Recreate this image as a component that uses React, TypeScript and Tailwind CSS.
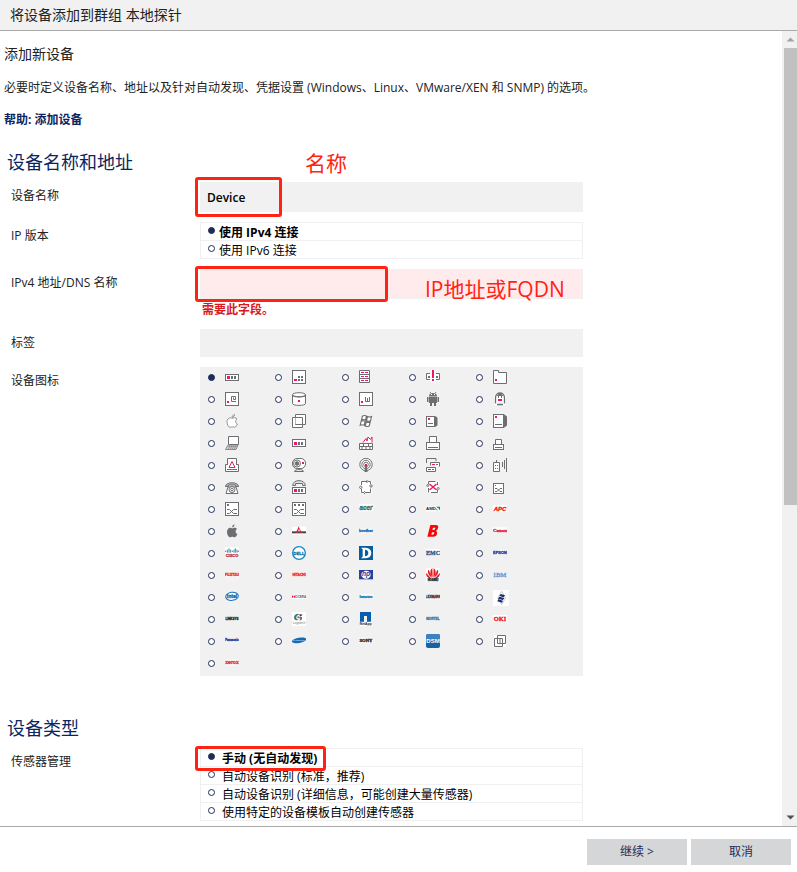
import React, { useState } from "react";

const G = "#6d6e71";
const P = "#ec1768";

const radioClass =
  "m-0 block h-[7px] w-[7px] shrink-0 appearance-none rounded-full border border-[#1f2c58] bg-white checked:bg-[#1f2c58]";

type Wrap = { children: React.ReactNode };

/* Line icon on a 14 unit grid */
function Line({ children }: Wrap) {
  return (
    <svg width="14" height="14" viewBox="0 0 14 14" fill="#fff" stroke={G} aria-hidden="true">
      {children}
    </svg>
  );
}

/* Brand logo on a 42 unit grid */
function Brand({ children }: Wrap) {
  return (
    <svg width="14" height="14" viewBox="0 0 42 42" aria-hidden="true">
      {children}
    </svg>
  );
}

function Dot({ x, y, w = 2, h = 2, c = G }: { x: number; y: number; w?: number; h?: number; c?: string }) {
  return <rect x={x} y={y} width={w} height={h} fill={c} stroke="none" />;
}

const Box = () => <rect x=".5" y=".5" width="13" height="13" />;

type WordProps = {
  text: string;
  color: string;
  size: number;
  y?: number;
  italic?: boolean;
  serif?: boolean;
  weight?: number;
};

function Word({ text, color, size, y = 25, italic, serif, weight = 700 }: WordProps) {
  return (
    <text
      x="21"
      y={y}
      fontSize={size}
      fontWeight={weight}
      fontStyle={italic ? "italic" : "normal"}
      fontFamily={serif ? "Liberation Serif, serif" : "Liberation Sans, sans-serif"}
      textAnchor="middle"
      fill={color}
      stroke={color}
      strokeWidth={weight > 400 ? 1 : 0}
    >
      {text}
    </text>
  );
}

function WordLogo(props: WordProps) {
  const y = props.y ?? 25;
  return (
    <Brand>
      <rect x="0" y={y - props.size + 1} width="42" height={props.size + 2} fill="#fff" />
      <Word {...props} />
    </Brand>
  );
}

const applePath =
  "M9.6 0.6C9.7 2 8.4 3.3 7.1 3.3 7 1.9 8.3.7 9.6.6zM7.1 4.4C7.8 4.4 8.5 3.7 9.6 3.7c1.100 0 1.900.5 2.400 1.200C10 6.200 10.200 9.100 12.400 10c-.6 1.500-1.700 3.300-2.800 3.300-.9 0-1.200-.5-2.200-.5s-1.400.5-2.200.5C3.500 13.300 2 10.500 2 8c0-2.600 1.500-4.200 3.200-4.200.9 0 1.500.6 1.900.6z";

const Crossing = () => <path d="M2 7.500h2.500l4 4H12M2 11.500h2.500l4-4H12" fill="none" />;

const icons: [string, React.ReactNode][] = [
  ["switch", <Line>
    <rect x=".5" y="4.500" width="13" height="6" />
    <Dot x={2} y={6} w={3} h={3} c={P} /><Dot x={6} y={6} w={2} h={3} /><Dot x={9} y={6} w={2} h={3} />
  </Line>],
  ["server", <Line><Box /><Dot x={2} y={9} w={3} c={P} /><Dot x={6} y={6} /><Dot x={9} y={6} /><Dot x={6} y={9} /><Dot x={9} y={9} /></Line>],
  ["rack", <Line>
    <path d="M.5.5h10v12H.5zM.5 4.500h10M.5 8.500h10" />
    {[2, 6, 10].map((y) => <g key={y}><Dot x={2} y={y} w={3} h={1} c={P} /><Dot x={6} y={y} w={3} h={1} c={P} /></g>)}
  </Line>],
  ["warning", <Line>
    <path d="M0 3h14v8H0zM5 0h4v13H5z" stroke="none" />
    <path d="M4 3.500H.5v6H4M10 3.500h3.500v6H10" fill="none" />
    <Dot x={2} y={6} /><Dot x={10} y={6} />
    <Dot x={6} y={0} h={8} c={P} /><Dot x={6} y={9} c={P} />
  </Line>],
  ["folder", <Line><path d="M.5.5h5v2h8v11H.5z" /><Dot x={2} y={9} c={P} /></Line>],

  ["mail server", <Line><Box /><Dot x={2} y={9} c={P} /><path d="M11 9.500H6.500v-5h4v3h-2v-2" fill="none" /></Line>],
  ["disk", <Line><path d="M.5 2.500v9c0 2.500 13 2.500 13 0v-9" /><ellipse cx="7" cy="2.700" rx="6.500" ry="2" /><path d="M.5 3.500c1 2 12 2 13 0" fill="none" /><Dot x={6} y={8} c={P} /></Line>],
  ["web server", <Line><Box /><Dot x={2} y={9} c={P} /><path d="M6.500 5v4.500h4V5M8.500 6v3" fill="none" /></Line>],
  ["android", <Line>
    <g fill={G} stroke="none">
      <path d="M3 4c0-4 8-4 8 0z" />
      <path d="M3 4.500h8V11H3zM1 5h1.500v5H1zM11.500 5H13v5h-1.500zM4 11h2v3H4zM8 11h2v3H8z" />
    </g>
    <path d="M4 0l1 1.500M10 0L9 1.500" strokeWidth=".8" />
    <Dot x={5} y={2} w={1} h={1} c="#fff" /><Dot x={8} y={2} w={1} h={1} c="#fff" />
  </Line>],
  ["linux", <Line>
    <path d="M1 13V6C1-1 13-1 13 6v7z" stroke="none" />
    <path d="M2.500 11.500V6C2.500-.7 11.500-.7 11.500 6v5.500M4 12.500h6" strokeWidth="1.300" />
    <path d="M4.500 3.500C5 1.500 9 1.500 9.500 3.500z" fill={G} />
    <Dot x={5} y={4} w={1} h={2} /><Dot x={8} y={4} w={1} h={2} />
    <Dot x={5} y={7} w={4} c={P} />
  </Line>],

  ["apple outline", <Line><path d={applePath} strokeWidth=".7" /></Line>],
  ["virtual machines", <Line>
    <path d="M.5 3.500h10v10H.5z" />
    <path d="M3.500.5h10v10h-10z" />
    <path d="M3.500 3.500h7v7h-7zM5.500 5.500h3v3h-3z" stroke="none" />
    <path d="M10.500 3.500v7h-7M3.500 3.500h7" fill="none" />
  </Line>],
  ["windows", <Line>
    <path d="M3.500 2q2.200-1 4 0L6.500 6q-2-1-4 0zM8.500 2.600q2 .9 4 0l-1 4.200q-2 .9-4 0zM2.200 7.200q2-1 4 0l-1 4q-2-1-4 0zM7.200 8q2 .9 4 0l-1 4q-2 .9-4 0z" strokeWidth="1.100" />
  </Line>],
  ["small tower", <Line><path d="M8.500 2.500l2.500 1v8l-2.500 1z" fill={G} /><rect x=".5" y="2.500" width="8" height="10" /><Dot x={2} y={4} c={P} /><Dot x={2} y={9} w={5} h={1} /></Line>],
  ["tower", <Line><path d="M10.500.5l3 2v9l-3 2z" fill={G} /><rect x=".5" y=".5" width="10" height="13" /><Dot x={2} y={2} c={P} /><Dot x={2} y={10} w={7} h={1} /></Line>],

  ["laptop", <Line><path d="M3.500.5h10v8h-10z" /><path d="M3 9h10l-2 4.500H.5z" fill="#fff" strokeWidth=".8" /><path d="M2.500 10.500h10M1.500 12h10M5 9l-1.500 4M7 9l-1.500 4M9 9l-1.500 4M11 9l-1.500 4" strokeWidth=".6" /></Line>],
  ["hub", <Line>
    <rect x=".5" y="3.500" width="13" height="7" />
    <Dot x={2} y={6} w={3} h={3} c={P} /><Dot x={6} y={6} w={2} h={3} /><Dot x={9} y={6} w={2} h={3} />
  </Line>],
  ["firewall", <Line><path d="M.5 7.500h13v6H.5zM.5 10.500h13M4.500 7.500v3M9.500 7.500v3M7 10.500v3M3 10.500v3M11 10.500v3" /><path d="M4 6.500l3-4 1 2.500 1-4 2.500 2.500L13 1v5.500" fill="#fff" stroke={P} /></Line>],
  ["printer", <Line><path d="M3.500 7V.5h7V7" /><rect x=".5" y="6.500" width="13" height="7" /><Dot x={2} y={11} w={10} h={1} /></Line>],
  ["small printer", <Line><path d="M2.500 8V3.500h6V8" /><rect x=".5" y="8.500" width="10" height="5" /><Dot x={2} y={11} w={7} h={1} /></Line>],

  ["color printer", <Line><path d="M2.500 8V.5h9V8" /><path d="M.5 6.500h13v7H.5z" /><path d="M3 6h8v3H3z" stroke="none" /><path d="M4 9.500l3-6 3 6z" fill="#fff" stroke={P} /><Dot x={2} y={11} w={10} h={1} /></Line>],
  ["camera", <Line><path d="M2.500 13.500c0-2.500 9-2.500 9 0z" /><rect x=".5" y=".5" width="13" height="10" rx="4.500" /><circle cx="5" cy="5.500" r="3.500" /><circle cx="5" cy="5.500" r="1.800" fill={G} /><Dot x={10} y={4} c={P} /></Line>],
  ["antenna", <Line><circle cx="7" cy="6.500" r="6.200" /><circle cx="7" cy="6.500" r="4.200" /><circle cx="7" cy="6.500" r="2.300" /><path d="M5.500 14L6 8h2l.5 6z" fill={G} stroke="none" /><Dot x={6} y={6} c={P} /></Line>],
  ["network", <Line><path d="M10 3V.5H.5V5" fill="none" /><path d="M4.500 4.500h9v4M4.500 4.500v3" /><path d="M.5 9.500h9v4h-9z" /><Dot x={6} y={6} w={3} h={1} c={P} /><Dot x={10} y={6} h={1} /><Dot x={2} y={11} w={3} h={1} c={P} /><Dot x={6} y={11} h={1} /></Line>],
  ["wireless", <Line><path d="M.5 4.500h6v9h-6zM3.500 2v2.500M9.500 4v5M11.500 2v9M13.500 0v14" /><Dot x={2} y={7} w={1} h={1} /><Dot x={4} y={7} w={1} h={1} /><Dot x={2} y={10} w={1} h={1} /><Dot x={4} y={10} w={1} h={1} /></Line>],

  ["telephone", <Line><path d="M3 7L1 13.500h12L11 7z" /><path d="M.5 6.500c0-5 13-5 13 0h-3V5h-7v1.500z" fill="#b6b7b9" /><circle cx="7" cy="9.500" r="3" /><circle cx="7" cy="9.500" r="1.300" /></Line>],
  ["ip phone", <Line><path d="M.7 5.500c0-6.500 12.600-6.500 12.600 0H10.500V3.500h-7v2z" fill="#dedfe0" /><rect x=".5" y="7.500" width="13" height="6" /><Dot x={2} y={9} w={3} h={3} c={P} /><Dot x={6} y={9} h={3} /><Dot x={9} y={9} h={3} /></Line>],
  ["router", <Line><path d="M1 1h12v12H1z" stroke="none" /><path d="M2.500 5V1.500H8M9 1.500h2.500V4M11.500 8.500v4H6M5 12.500H2.500V9" fill="none" /><circle cx="1.800" cy="7.300" r="1.200" /><circle cx="12" cy="6" r="1.200" /><path d="M7.500 0l1.500 1.500L7.500 3M6 11l-1.500 1.500L6 14" fill="none" /></Line>],
  ["router error", <Line><path d="M1 1h12v12H1z" stroke="none" /><path d="M2.500 4V1.500h7M11.500 2v3M11.500 10v2.500H5M2.500 12.500V8" fill="none" /><circle cx="1.800" cy="5.500" r="1" /><circle cx="12.200" cy="8.500" r="1" /><path d="M3.500 4l7 6M10.500 4l-7 6" stroke={P} strokeWidth="1.400" /></Line>],
  ["small switch", <Line><rect x=".5" y="3.500" width="10" height="10" /><Dot x={2} y={5} w={1} h={1} /><path d="M2 8.500h2l3 3h2M2 11.500h2l3-3h2" fill="none" /></Line>],

  ["layer 2 switch", <Line><Box /><Dot x={2} y={2} /><Crossing /></Line>],
  ["layer 3 switch", <Line><Box /><Dot x={2} y={2} /><Dot x={6} y={2} /><Dot x={10} y={2} /><Crossing /></Line>],
  ["acer", <WordLogo text="acer" color="#30706c" size={19} italic />],
  ["amd", <Brand><rect y="14" width="42" height="14" fill="#fff" /><text x="0" y="25" fontSize="13" fontWeight="700" fontFamily="Liberation Sans, sans-serif" fill="#222">AMD</text><path d="M31 14h11v11l-4-4v-3h-3zM31 19v6h6l-3-2z" fill="#16836b" /></Brand>],
  ["apc", <WordLogo text="APC" color="#f5100c" size={18} italic y={27} />],

  ["apple", <Line><path d={applePath} fill={G} stroke="none" /></Line>],
  ["avocent", <Brand><rect y="8" width="42" height="24" fill="#fff" /><path d="M0 22h42v6H0z" fill="#444" /><path d="M20 7l-5 12-5 7h7l4-12 4 12h7l-7-7z" fill="#db2944" /></Brand>],
  ["brother", <WordLogo text="brother" color="#1668a8" size={12} />],
  ["brocade", <Brand><path d="M13 3h17q9 1 6 9-1 6-6 8 5 3 3 10-2 8-11 8H4zm8 8l-2 7h5q4-1 4-7zm-3 14l-2 7h5q4-1 4-7z" fill="#fb0505" /></Brand>],
  ["canon", <WordLogo text="Canon" color="#d51b3c" size={15} serif y={24} />],

  ["cisco", <Brand><rect y="4" width="42" height="32" fill="#fff" /><path d="M2 14v4M7 11v9M12 7v13M17 11v9M22 14v4M27 11v9M31 7v13M36 11v9M40 14v4" stroke="#3f86a0" strokeWidth="3" /><Word text="CISCO" color="#bd3c4f" size={12} y={33} /></Brand>],
  ["dell", <Brand><circle cx="21" cy="21" r="19" fill="#fff" stroke="#1689c7" strokeWidth="4" /><Word text="DELL" color="#1174b4" size={13} y={26} /></Brand>],
  ["d-link", <Brand><path d="M0 0h42v42H0z" fill="#075da0" /><path d="M6 5h14q17 2 17 16T20 37H6l5-5V10zm12 6v20q10-1 10-10T18 11z" fill="#fff" /></Brand>],
  ["emc", <WordLogo text="EMC" color="#2b5c8d" size={18} serif y={26} />],
  ["epson", <WordLogo text="EPSON" color="#323e91" size={12} y={23} />],

  ["fujitsu", <WordLogo text="FUJITSU" color="#ed2d37" size={10} />],
  ["hitachi", <WordLogo text="HITACHI" color="#ee2833" size={10} y={23} />],
  ["hp", <Brand><path d="M0 6h42v28H0z" fill="#29419a" /><ellipse cx="21" cy="20" rx="14" ry="12" fill="#fff" /><text x="21" y="25" fontSize="20" fontStyle="italic" fontWeight="700" fontFamily="Liberation Sans, sans-serif" textAnchor="middle" fill="#29419a">hp</text></Brand>],
  ["huawei", <Brand><rect width="42" height="42" fill="#fff" /><path d="M20 28C9 16 13 4 19 1zM22 28C33 16 29 4 23 1zM18 29C3 20 4 8 8 5zM24 29c15-9 14-21 10-24zM16 32C1 29-1 18 1 15zM26 32c15-3 17-14 15-17z" fill="#e61c20" /><Word text="HUAWEI" color="#333" size={8} y={40} /></Brand>],
  ["ibm", <Brand><rect y="12" width="42" height="17" fill="#fff" /><Word text="IBM" color="#5c90d2" size={20} serif y={27} /><path d="M0 17h42M0 22h42" stroke="#fff" strokeWidth=".6" /></Brand>],

  ["intel", <Brand><ellipse cx="21" cy="19" rx="19" ry="12" fill="#fff" stroke="#1670b5" strokeWidth="3" transform="rotate(-7 21 19)" /><Word text="intel" color="#136bb0" size={15} y={24} /></Brand>],
  ["kyocera", <Brand><rect y="14" width="42" height="13" fill="#fff" /><path d="M0 15l5 5-5 5zM10 15l-7 5 7 5z" fill="#e32246" /><text x="10" y="24" fontSize="9" fontWeight="700" fontFamily="Liberation Sans, sans-serif" fill="#555">OCERA</text></Brand>],
  ["lenovo", <WordLogo text="lenovo" color="#1673ad" size={12} y={23} />],
  ["lexmark", <Brand><rect y="14" width="42" height="14" fill="#fff" /><Word text="LEXMARK" color="#444" size={9} y={23} /><path d="M25 18l3 4-3 5-3-5z" fill="#e3344d" /></Brand>],
  ["fortinet", <svg width="16" height="16" viewBox="0 0 48 48" aria-hidden="true"><path d="M0 0h48v48H0z" fill="#fff" /><path d="M26 4l12 20-12 20-12-20z" fill="none" stroke="#b3b6bc" strokeWidth="2" /><path d="M23 12l13 4-4 6-13-4zM19 20l15 4-4 6-15-4zM16 28l14 4-3 6-14-4z" fill="#1c2e69" /></svg>],

  ["linksys", <WordLogo text="LINKSYS" color="#2b2b2b" size={9} y={23} />],
  ["logitech", <Brand><rect width="42" height="42" fill="#fff" /><path d="M18 5C7 5 3 17 9 23q6 4 11-1-9 0-7-7 1-6 8-7z" fill="#347d78" /><path d="M22 6l10 2-8 6z" fill="#333" /><path d="M21 15h9q2 9-7 11 3-5-2-11z" fill="#6b7473" /><circle cx="19" cy="16" r="3" fill="#d63952" /><Word text="Logitech" color="#777" size={10} y={36} weight={400} /></Brand>],
  ["netapp", <Brand><path d="M3 0h33v29H24V12h-9v17H3z" fill="#075cae" /><rect x="3" y="30" width="33" height="12" fill="#fff" /><text x="20" y="39" fontSize="10" fontWeight="700" fontFamily="Liberation Sans, sans-serif" textAnchor="middle" fill="#222">NetApp</text></Brand>],
  ["nortel", <WordLogo text="NORTEL" color="#3d789f" size={10} y={24} />],
  ["oki", <WordLogo text="OKI" color="#ee171b" size={19} serif y={27} />],

  ["panasonic", <WordLogo text="Panasonic" color="#27409a" size={8} y={22} />],
  ["samsung", <Brand><ellipse cx="21" cy="19" rx="22" ry="8" fill="#1769b4" transform="rotate(-10 21 19)" /><text x="21" y="22" fontSize="7" fontWeight="700" fontFamily="Liberation Sans, sans-serif" textAnchor="middle" fill="#b9dcf3">SAMSUNG</text></Brand>],
  ["sony", <WordLogo text="SONY" color="#262626" size={14} serif y={24} />],
  ["synology dsm", <Brand><rect width="42" height="42" rx="6" fill="#1862a4" /><path d="M0 21V6q0-6 6-6h30q6 0 6 6v15z" fill="#3c82c3" /><text x="21" y="26" fontSize="18" fontWeight="700" fontFamily="Liberation Sans, sans-serif" textAnchor="middle" fill="#fff">DSM</text></Brand>],
  ["cluster", <Line><path d="M1 1h12v12H1z" stroke="none" /><path d="M4.500 1.500h8v8h-8z" /><path d="M1.500 4.500h8v8h-8z" fill="none" /><path d="M7 4v5.500h5" fill="none" /></Line>],

  ["xerox", <WordLogo text="xerox" color="#df3343" size={15} y={25} />],
];

function Field({ label, htmlFor, children }: { label: string; htmlFor?: string; children: React.ReactNode }) {
  const Tag = htmlFor ? "label" : "div";
  return (
    <div className="grid grid-cols-[189px_minmax(0,383px)]">
      <Tag {...(htmlFor ? { htmlFor } : {})} className="leading-7">
        {label}
      </Tag>
      <div className="relative">{children}</div>
    </div>
  );
}

function RadioList({ name, options, gap }: { name: string; options: string[]; gap: "narrow" | "wide" }) {
  const [value, setValue] = useState(0);
  return (
    <div role="radiogroup" aria-label={name} className="border-x border-t border-[#f0f0f0] text-black">
      {options.map((text, i) => (
        <label
          key={text}
          className={`flex h-[18px] items-start border-b border-[#f0f0f0] pl-[7px] ${gap === "wide" ? "gap-[7px]" : "gap-1"} ${i === value ? "font-bold" : ""}`}
        >
          <input type="radio" name={name} checked={i === value} onChange={() => setValue(i)} className={`${radioClass} mt-1`} />
          <span className="leading-5 whitespace-nowrap">{text}</span>
        </label>
      ))}
    </div>
  );
}

const frame = "pointer-events-none absolute rounded-[3px] border-3 border-[#ff2313]";
const note = "pointer-events-none absolute text-[21px] leading-7 whitespace-nowrap text-[#ff2313]";
const heading = "pl-[7px] text-lg leading-7 text-[#0b2560]";

export default function App() {
  const [icon, setIcon] = useState(0);
  return (
    <div className="flex h-screen flex-col bg-white font-['Open_Sans','Noto_Sans_CJK_SC',sans-serif] text-xs text-[#222]">
      <header className="h-[31px] shrink-0 border-b border-[#aaa] bg-[#f1f1f1] pl-[10px]">
        <h1 className="text-sm leading-[30px]">将设备添加到群组 本地探针</h1>
      </header>

      <div className="flex min-h-0 flex-1">
        <main className="min-w-0 flex-1 overflow-hidden pt-[13px]">
          <div className="pl-1">
            <h2 className="text-sm leading-5">添加新设备</h2>
            <p className="mt-[14px] leading-5">
              必要时定义设备名称、地址以及针对自动发现、凭据设置 (Windows、Linux、VMware/XEN 和 SNMP) 的选项。
            </p>
            <p className="mt-3 leading-5 font-bold text-[#0b2560]">
              <a href="#help">帮助: 添加设备</a>
            </p>
          </div>

          <section className="mt-[18px]">
            <h3 className={heading}>设备名称和地址</h3>
            <div className="mt-[6px] flex flex-col gap-[10px] pl-[11px]">
              <Field label="设备名称" htmlFor="device">
                <input id="device" type="text" defaultValue="Device" className="block h-[30px] w-full bg-[#f1f1f1] px-[7px] font-semibold text-black outline-none" />
                <span className={`${frame} -top-[5px] -left-[5px] h-10 w-[87px]`} />
                <span className={`${note} -top-[33px] left-[105px]`}>名称</span>
              </Field>
              <Field label="IP 版本">
                <RadioList name="IP 版本" options={["使用 IPv4 连接", "使用 IPv6 连接"]} gap="narrow" />
              </Field>
              <Field label="IPv4 地址/DNS 名称" htmlFor="address">
                <input id="address" type="text" className="block h-[30px] w-full border border-[#f0f0f0] bg-[#ffebec] px-[6px] outline-none" />
                <span className={`${frame} -top-[3px] -left-[5px] h-9 w-[193px]`} />
                <span className={`${note} top-[6px] left-[225px]`}>IP地址或FQDN</span>
                <p className="h-5 pl-[2px] leading-[22px] font-bold text-[#d71920]">需要此字段。</p>
              </Field>
              <Field label="标签" htmlFor="tags">
                <input id="tags" type="text" className="block h-7 w-full bg-[#f1f1f1] px-[7px] outline-none" />
              </Field>
              <Field label="设备图标">
                <div role="radiogroup" aria-label="设备图标" className="grid grid-cols-[repeat(5,67px)] bg-[#f1f1f1] pb-px pl-2">
                  {icons.map(([name, drawing], i) => (
                    <label key={name} className="flex h-[22px] items-start gap-[10px] pt-[3px]">
                      <input type="radio" name="icon" aria-label={name} checked={i === icon} onChange={() => setIcon(i)} className={`${radioClass} mt-1`} />
                      {drawing}
                    </label>
                  ))}
                </div>
              </Field>
            </div>
          </section>

          <section className="mt-[38px]">
            <h3 className={heading}>设备类型</h3>
            <div className="mt-[6px] pl-[11px]">
              <Field label="传感器管理">
                <RadioList
                  name="传感器管理"
                  options={["手动 (无自动发现)", "自动设备识别 (标准，推荐)", "自动设备识别 (详细信息，可能创建大量传感器)", "使用特定的设备模板自动创建传感器"]}
                  gap="wide"
                />
                <span className={`${frame} -top-[2px] -left-[5px] h-[25px] w-[131px]`} />
              </Field>
            </div>
          </section>
        </main>

        <div aria-hidden="true" className="flex w-[15px] shrink-0 flex-col items-center bg-[#f1f1f1]">
          <svg width="15" height="17" viewBox="0 0 15 17"><path d="M4.500 10.500l4-4 4 4z" fill="#a3a3a3" /></svg>
          <div className="ml-[2px] h-[457px] w-[13px] bg-[#c1c1c1]" />
          <svg className="mt-auto" width="15" height="17" viewBox="0 0 15 17"><path d="M4.500 6.500l4 4 4-4z" fill="#505050" /></svg>
        </div>
      </div>

      <footer className="flex h-[46px] shrink-0 justify-end gap-1 border-t border-[#aaa] pt-3 pr-[6px] text-[#1f2c58]">
        <button type="button" className="h-[26px] w-[100px] bg-[#d4d6d8] leading-[26px]">继续 &gt;</button>
        <button type="button" className="h-[26px] w-[100px] bg-[#d4d6d8] leading-[26px]">取消</button>
      </footer>
    </div>
  );
}
